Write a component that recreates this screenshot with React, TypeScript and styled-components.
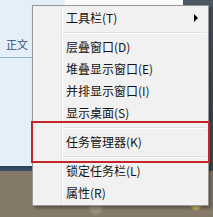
import React from 'react';
import styled, { createGlobalStyle } from 'styled-components';

type Entry = { label: string; submenu?: boolean } | 'separator';

const entries: Entry[] = [
  { label: '工具栏(T)', submenu: true },
  'separator',
  { label: '层叠窗口(D)' },
  { label: '堆叠显示窗口(E)' },
  { label: '并排显示窗口(I)' },
  { label: '显示桌面(S)' },
  'separator',
  { label: '任务管理器(K)' },
  'separator',
  { label: '锁定任务栏(L)' },
  { label: '属性(R)' },
];

const App: React.FC = () => (
  <>
    <GlobalStyle />
    <Screen>
      <DocWindow>
        <TitleStrip>
          <StripBlue />
          <StripWhite />
        </TitleStrip>
        <StyleGallery>
          <StyleName>正文</StyleName>
        </StyleGallery>
      </DocWindow>
      <SideDark />
      <Taskbar />
      <Wallpaper />

      <Menu>
        {entries.map((entry, i) =>
          entry === 'separator' ? (
            <Separator key={i} />
          ) : (
            <Item key={i}>
              <Label>{entry.label}</Label>
              {entry.submenu && <Arrow />}
            </Item>
          ),
        )}
      </Menu>
      <Highlight />
    </Screen>
  </>
);

export default App;

const GlobalStyle = createGlobalStyle`
  html, body {
    margin: 0;
    padding: 0;
    background: #ffffff;
  }
  body {
    font-family: "Noto Sans CJK SC", "Noto Sans", sans-serif;
  }
`;

const Screen = styled.div`
  position: relative;
  width: 213px;
  height: 217px;
  overflow: hidden;
  display: grid;
  grid-template-columns: 183px 1fr;
  grid-template-rows: 166px 5px 1fr;
`;

const DocWindow = styled.div`
  grid-column: 1;
  grid-row: 1;
  display: flex;
  flex-direction: column;
  background: #e5eff9;
`;

const TitleStrip = styled.div`
  display: flex;
  height: 5px;
`;

const StripBlue = styled.div`
  width: 65px;
  background: #e5eff9;
`;

const StripWhite = styled.div`
  flex: 1;
  background: #fdfdfd;
`;

const StyleGallery = styled.div`
  width: 32px;
`;

const StyleName = styled.div`
  padding: 30px 0 4px 6px;
  line-height: 18px;
  font-size: 11px;
  color: #35506d;
  border-bottom: 1px solid #8fb5da;
`;

const SideDark = styled.div`
  grid-column: 2;
  grid-row: 1 / 3;
  background: linear-gradient(180deg, #4d5863 0%, #3f4a52 60%, #3a4a48 100%);
`;

const Taskbar = styled.div`
  grid-column: 1;
  grid-row: 2;
  background: linear-gradient(180deg, #2b4058 0%, #3a5268 100%);
`;

const Wallpaper = styled.div`
  grid-column: 1 / 3;
  grid-row: 3;
  background:
    radial-gradient(circle at 20% 30%, #a3967f 0 3px, transparent 5px),
    radial-gradient(circle at 70% 60%, #6f6455 0 4px, transparent 7px),
    radial-gradient(circle at 92% 75%, #c8b45a 0 3px, transparent 6px),
    radial-gradient(circle at 45% 80%, #9b8e78 0 5px, transparent 8px),
    #857a6a;
`;

const Menu = styled.div`
  position: absolute;
  left: 32px;
  top: 5px;
  width: 175px;
  padding: 1px 0 1px;
  background: linear-gradient(90deg, #f1f1f1 0 28px, #e2e3e3 28px 29px, #ffffff 29px 30px, #f1f1f1 30px);
  border: 1px solid #979797;
  box-shadow: 2px 2px 3px rgba(0, 0, 0, 0.35);
`;

const Item = styled.div`
  height: 22px;
  display: flex;
  align-items: center;
  padding-left: 33px;
  padding-right: 10px;
`;

const Label = styled.span`
  flex: 1;
  font-size: 12px;
  line-height: 22px;
  color: #141414;
  white-space: nowrap;
`;

const Arrow = styled.span`
  width: 0;
  height: 0;
  border-top: 4px solid transparent;
  border-bottom: 4px solid transparent;
  border-left: 4px solid #000000;
`;

const Separator = styled.div`
  height: 7px;
  margin-left: 30px;
  margin-right: 2px;
  display: flex;
  flex-direction: column;
  justify-content: center;

  &::before {
    content: '';
    height: 1px;
    background: #e0e0e0;
  }
  &::after {
    content: '';
    height: 1px;
    background: #ffffff;
  }
`;

const Highlight = styled.div`
  position: absolute;
  left: 31px;
  top: 121px;
  width: 175px;
  height: 38px;
  border: 2px solid #c2262c;
`;
